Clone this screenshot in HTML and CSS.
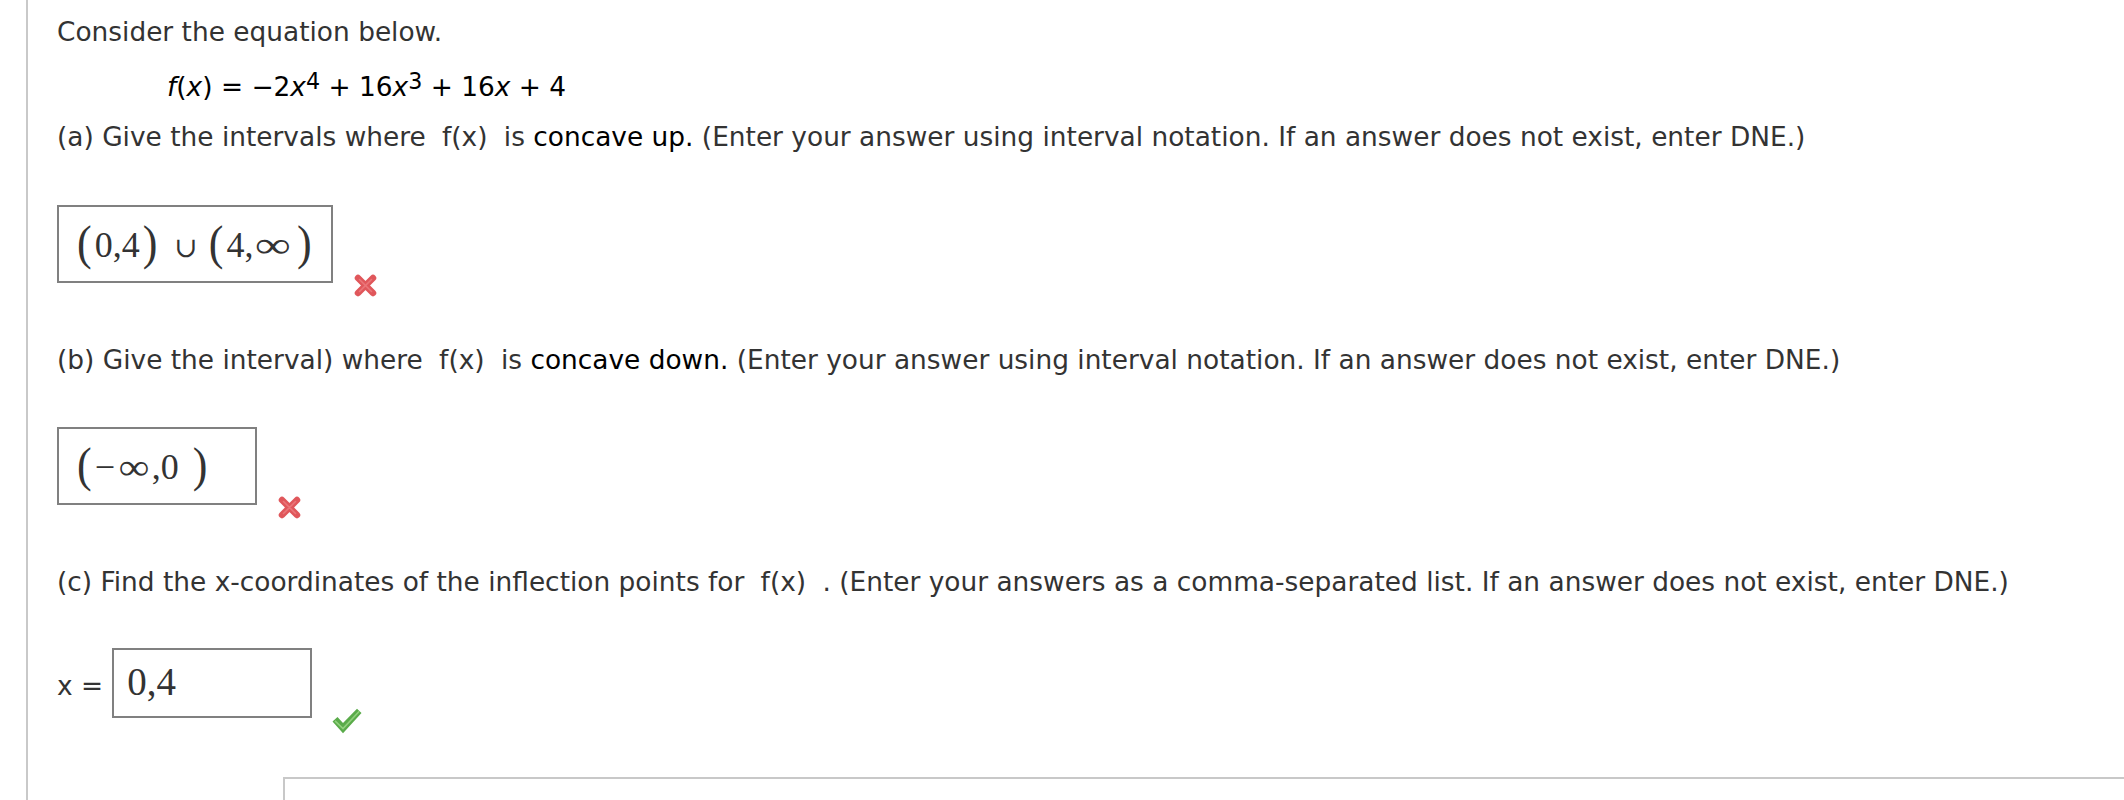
FILE: index.html
```html
<!DOCTYPE html>
<html lang="en">
<head>
<meta charset="utf-8">
<title>Concavity question</title>
<link rel="stylesheet" href="styles.css">
</head>
<body>
<div class="question">
  <p class="line intro">Consider the equation below.</p>
  <p class="line equation"><i>f</i>(<i>x</i>) = −2<i>x</i><sup>4</sup> + 16<i>x</i><sup>3</sup> + 16<i>x</i> + 4</p>

  <section class="part part-a">
    <p class="line">(a) Give the intervals where <span class="fx">f(x)</span> is <span class="key">concave up.</span> (Enter your answer using interval notation. If an answer does not exist, enter DNE.)</p>
    <div class="answer">
      <div class="box math math-wide"><span class="paren">(</span><span class="num">0,4</span><span class="paren">)</span><span class="cup">∪</span><span class="paren">(</span><span class="num">4,</span><span class="inf">∞</span><span class="paren">)</span></div>
      <svg class="mark mark-x" width="25" height="25" viewBox="0 0 25 25"><path d="M5 5 L20 20 M20 5 L5 20" stroke="#e0575b" stroke-width="6.5" stroke-linecap="round"/><path d="M6.5 6.5 L18.5 18.5 M18.5 6.5 L6.5 18.5" stroke="#f39092" stroke-width="1.6" stroke-linecap="round" opacity=".55"/></svg>
    </div>
  </section>

  <section class="part part-b">
    <p class="line">(b) Give the interval) where <span class="fx">f(x)</span> is <span class="key">concave down.</span> (Enter your answer using interval notation. If an answer does not exist, enter DNE.)</p>
    <div class="answer">
      <div class="box math"><span class="paren">(</span><span class="minus">−</span><span class="inf inf-b">∞</span><span class="num">,0</span><span class="paren close-gap">)</span></div>
      <svg class="mark mark-x" width="25" height="25" viewBox="0 0 25 25"><path d="M5 5 L20 20 M20 5 L5 20" stroke="#e0575b" stroke-width="6.5" stroke-linecap="round"/><path d="M6.5 6.5 L18.5 18.5 M18.5 6.5 L6.5 18.5" stroke="#f39092" stroke-width="1.6" stroke-linecap="round" opacity=".55"/></svg>
    </div>
  </section>

  <section class="part part-c">
    <p class="line">(c) Find the x-coordinates of the inflection points for <span class="fx">f(x)</span> . (Enter your answers as a comma-separated list. If an answer does not exist, enter DNE.)</p>
    <div class="answer">
      <div class="field">
        <span class="label">x =</span>
        <div class="box box-plain">0,4</div>
      </div>
      <svg class="mark mark-check" width="30" height="26" viewBox="0 0 30 26"><path d="M0.5 13.5 L5.5 9 L11 15 L25 0.8 L29.5 5 L11 25.2 Z" fill="#5aab4a"/><path d="M3 12.8 L11 20.5 L27.3 3.2" stroke="#9fd98a" stroke-width="1.6" fill="none" opacity=".8"/></svg>
    </div>
  </section>

  <div class="next-panel"></div>
</div>
</body>
</html>
```

FILE: styles.css
```css
html, body {
  margin: 0;
  padding: 0;
  background: #ffffff;
  overflow: hidden;
}

.question {
  box-sizing: border-box;
  min-height: 100vh;
  margin-left: 26px;
  border-left: 2px solid #c9c9c9;
  padding: 16px 0 0 29px;
  font-family: "DejaVu Sans", Verdana, sans-serif;
  font-size: 26.4px;
  color: #333333;
}

.line {
  margin: 0;
  line-height: 32px;
  white-space: nowrap;
}

.equation {
  margin-top: 23px;
  padding-left: 110px;
  color: #000000;
}

.equation sup {
  font-size: 0.84em;
  line-height: 0;
  vertical-align: 7px;
}

.part-a .line {
  margin-top: 18px;
}

.part-b .line {
  margin-top: 61px;
}

.part-c .line {
  margin-top: 61px;
}

.fx {
  margin: 0 0.3em;
}

.key {
  color: #000000;
}

.answer {
  display: flex;
  align-items: flex-end;
  gap: 20px;
  margin-top: 52px;
}

.part-b .answer {
  margin-top: 51px;
}

.part-c .answer {
  margin-top: 50px;
}

.box {
  box-sizing: border-box;
  min-width: 200px;
  height: 78px;
  border: 2px solid #808080;
  padding: 13px 16px 0 18px;
  font-family: "Liberation Serif", "DejaVu Serif", serif;
  font-size: 36px;
  line-height: 50px;
  color: #333333;
  white-space: nowrap;
}

.math-wide {
  padding-left: 15px;
}

.paren {
  display: inline-block;
  font-size: 44px;
  line-height: 1;
  transform: scaleY(1.12);
}

.math-wide .paren {
  margin: 0 3px;
}

.cup {
  font-family: "DejaVu Serif", serif;
  font-size: 28px;
  margin: 0 8px 0 14px;
}

.inf {
  display: inline-block;
  line-height: 1;
  margin: 0 8px 0 7px;
  transform: scaleX(1.4);
}

.inf-b {
  margin: 0 5px 0 4px;
  transform: scaleX(1.2);
}

.minus {
  margin: 0 2px 0 3px;
}

.close-gap {
  margin-left: 14px;
}

.mark {
  flex: none;
  margin-bottom: -15px;
}

.mark-check {
  margin-bottom: -16px;
}

.field {
  display: flex;
  align-items: baseline;
  gap: 9px;
}

.label {
  line-height: 32px;
}

.box-plain {
  height: 70px;
  padding: 9px 13px 0;
  font-size: 39px;
  line-height: 46px;
}

.next-panel {
  height: 60px;
  margin: 59px 0 0 226px;
  border-top: 2px solid #c8c8c8;
  border-left: 2px solid #c8c8c8;
}
```
